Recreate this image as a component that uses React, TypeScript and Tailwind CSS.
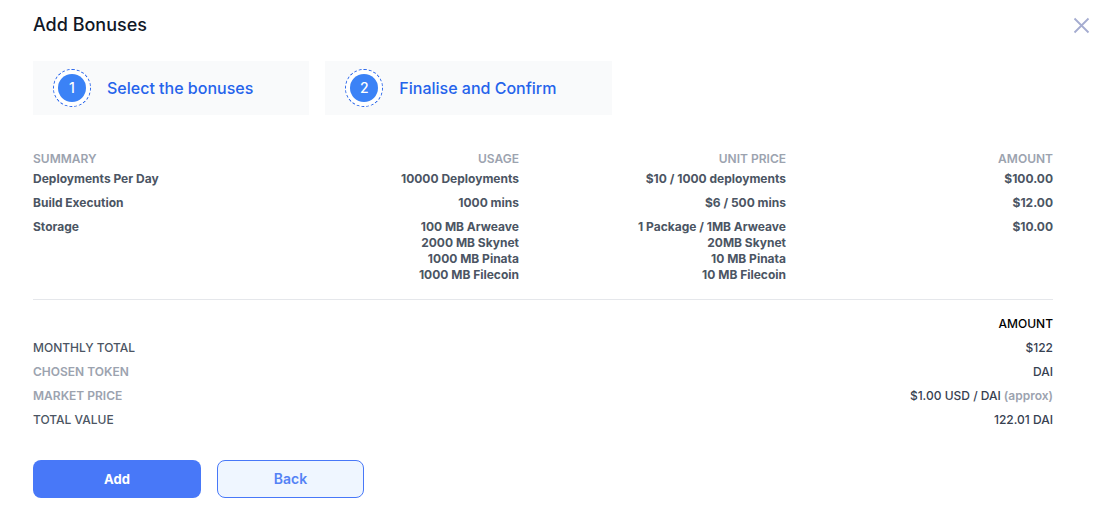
import React from "react";

const steps = ["Select the bonuses", "Finalise and Confirm"];

const items = [
  {
    name: "Deployments Per Day",
    usage: ["10000 Deployments"],
    price: ["$10 / 1000 deployments"],
    amount: "$100.00",
  },
  {
    name: "Build Execution",
    usage: ["1000 mins"],
    price: ["$6 / 500 mins"],
    amount: "$12.00",
  },
  {
    name: "Storage",
    usage: ["100 MB Arweave", "2000 MB Skynet", "1000 MB Pinata", "1000 MB Filecoin"],
    price: ["1 Package / 1MB Arweave", "20MB Skynet", "10 MB Pinata", "10 MB Filecoin"],
    amount: "$10.00",
  },
];

const totals = [
  { label: "MONTHLY TOTAL", value: "$122", muted: false },
  { label: "CHOSEN TOKEN", value: "DAI", muted: true },
  { label: "MARKET PRICE", value: "$1.00 USD / DAI", note: "(approx)", muted: true },
  { label: "TOTAL VALUE", value: "122.01 DAI", muted: false },
];

function Lines({ lines }: { lines: string[] }) {
  return (
    <>
      {lines.map((line) => (
        <div key={line}>{line}</div>
      ))}
    </>
  );
}

export default function App() {
  return (
    <main className="bg-white pt-[11px] pr-[18px] pl-[33px] font-['Inter',sans-serif] text-gray-900">
      <header className="flex items-center justify-between">
        <h1 className="text-lg font-medium text-[#111827]">Add Bonuses</h1>
        <button type="button" aria-label="Close" className="cursor-pointer">
          <svg width="17" height="17" viewBox="0 0 17 17" fill="none" stroke="#a5acd0" strokeWidth="1.8">
            <path d="M1.5 1.5 15.5 15.5M15.5 1.5 1.5 15.5" />
          </svg>
        </button>
      </header>

      <ol className="mt-[22px] flex gap-4">
        {steps.map((step, index) => (
          <li key={step} className="flex items-center gap-4 bg-[#f9fafb] py-2 pr-14 pl-5">
            <span className="flex size-[38px] items-center justify-center rounded-full border border-dashed border-[#2563eb] bg-white">
              <span className="flex size-7 items-center justify-center rounded-full bg-[#3b82f6] text-sm font-medium text-white">
                {index + 1}
              </span>
            </span>
            <span className="text-base font-medium text-[#2563eb]">{step}</span>
          </li>
        ))}
      </ol>

      <section className="mt-9 mr-[37px] text-xs">
        <table className="w-full table-fixed font-bold text-[#4b5563]">
          <thead className="text-[#9ca3af]">
            <tr>
              <th scope="col" className="w-[219px] pb-1 text-left font-semibold">SUMMARY</th>
              <th scope="col" className="pb-1 text-right font-semibold">USAGE</th>
              <th scope="col" className="pb-1 text-right font-semibold">UNIT PRICE</th>
              <th scope="col" className="pb-1 text-right font-semibold">AMOUNT</th>
            </tr>
          </thead>
          <tbody>
            {items.map((item) => (
              <tr key={item.name} className="align-top">
                <th scope="row" className="pb-2 text-left font-bold">{item.name}</th>
                <td className="pb-2 text-right"><Lines lines={item.usage} /></td>
                <td className="pb-2 text-right"><Lines lines={item.price} /></td>
                <td className="pb-2 text-right">{item.amount}</td>
              </tr>
            ))}
          </tbody>
        </table>

        <hr className="mt-2 mb-4 border-gray-200" />

        <table className="w-full font-medium text-[#374151]">
          <thead>
            <tr>
              <td />
              <th scope="col" className="pb-2 text-right font-medium text-black">AMOUNT</th>
            </tr>
          </thead>
          <tbody>
            {totals.map((total) => (
              <tr key={total.label}>
                <th
                  scope="row"
                  className={
                    total.muted
                      ? "pb-2 text-left font-semibold text-[#9ca3af]"
                      : "pb-2 text-left font-medium text-[#4b5563]"
                  }
                >
                  {total.label}
                </th>
                <td className="pb-2 text-right">
                  {total.value}
                  {total.note && <span className="font-semibold text-[#9ca3af]"> {total.note}</span>}
                </td>
              </tr>
            ))}
          </tbody>
        </table>
      </section>

      <div className="mt-6 flex gap-4 text-sm">
        <button type="button" className="h-[38px] w-[168px] cursor-pointer rounded-lg bg-[#4878f8] text-[13px] font-bold text-white">
          Add
        </button>
        <button
          type="button"
          className="h-[38px] w-[147px] cursor-pointer rounded-lg border border-[#4878f8] bg-[#eff6ff] font-semibold text-[#5482f5]"
        >
          Back
        </button>
      </div>
    </main>
  );
}
